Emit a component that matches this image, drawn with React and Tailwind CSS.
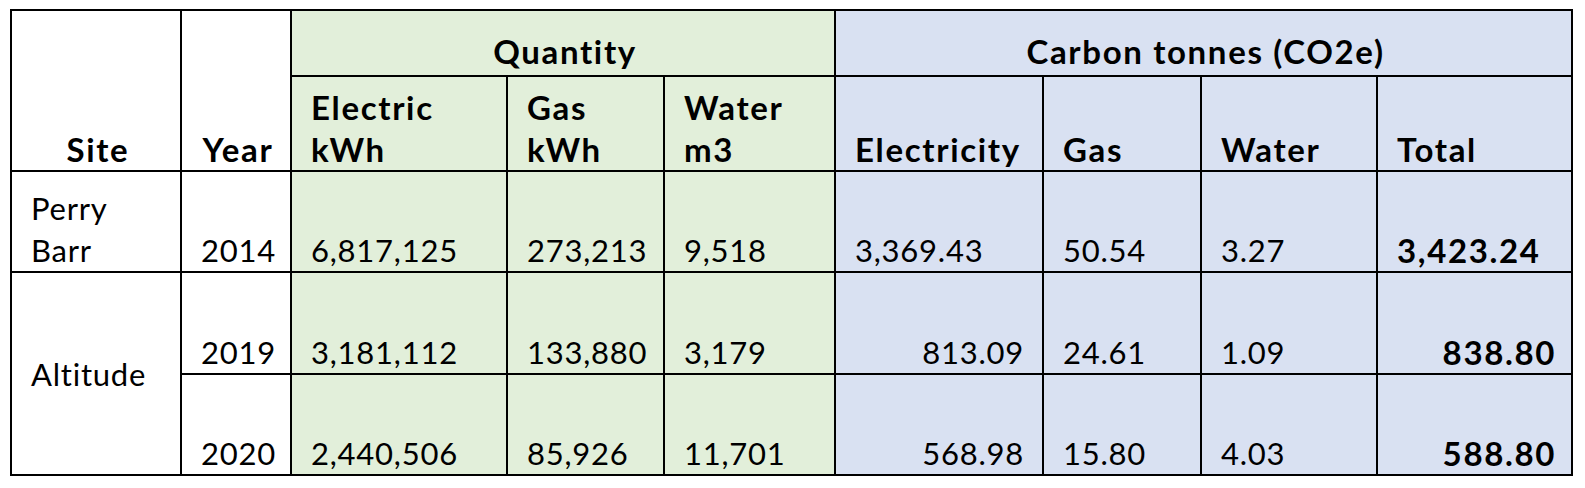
import React from 'react'

// Emissions summary table: quantities consumed and carbon tonnes per site/year.
const GREEN = 'bg-[#e2efda]'
const BLUE = 'bg-[#d9e1f2]'
// Bold text in the source is a wide face, so it gets a touch more size and tracking.
const BOLD = 'font-bold text-[33px] tracking-[0.05em]'

const rows = [
  { site: ['Perry', 'Barr'], year: '2014', elec: '6,817,125', gas: '273,213', water: '9,518', cElec: '3,369.43', cGas: '50.54', cWater: '3.27', total: '3,423.24', rightCarbon: false },
  { site: ['Altitude'], span: 2, year: '2019', elec: '3,181,112', gas: '133,880', water: '3,179', cElec: '813.09', cGas: '24.61', cWater: '1.09', total: '838.80', rightCarbon: true },
  { year: '2020', elec: '2,440,506', gas: '85,926', water: '11,701', cElec: '568.98', cGas: '15.80', cWater: '4.03', total: '588.80', rightCarbon: true },
]

const cell = 'border-2 border-black align-bottom pl-[19px] pr-[15px] pb-0'

export default function App() {
  return (
    <div className="bg-white w-[1585px] h-[488px] pt-[9px] pl-[10px] font-['Lato',sans-serif] text-[31px] leading-[42px] text-black tracking-[0.025em]">
      <table className="table-fixed border-collapse w-[1563px]">
        <colgroup>
          <col className="w-[170px]" />
          <col className="w-[110px]" />
          <col className="w-[216px]" />
          <col className="w-[157px]" />
          <col className="w-[171px]" />
          <col className="w-[208px]" />
          <col className="w-[158px]" />
          <col className="w-[176px]" />
          <col className="w-[195px]" />
        </colgroup>
        <thead className={BOLD}>
          <tr className="h-[66px]">
            <th rowSpan={2} className={`${cell} text-center pl-0 pr-0`}>Site</th>
            <th rowSpan={2} className={`${cell} text-center pl-0 pr-0`}>Year</th>
            <th colSpan={3} className={`${cell} ${GREEN} text-center pb-[3px]`}>Quantity</th>
            <th colSpan={4} className={`${cell} ${BLUE} text-center pb-[3px]`}>Carbon tonnes (CO2e)</th>
          </tr>
          <tr className="h-[95px]">
            <th className={`${cell} ${GREEN} text-left`}>Electric<br />kWh</th>
            <th className={`${cell} ${GREEN} text-left`}>Gas<br />kWh</th>
            <th className={`${cell} ${GREEN} text-left`}>Water<br />m3</th>
            <th className={`${cell} ${BLUE} text-left pl-[17px]`}>Electricity</th>
            <th className={`${cell} ${BLUE} text-left`}>Gas</th>
            <th className={`${cell} ${BLUE} text-left`}>Water</th>
            <th className={`${cell} ${BLUE} text-left`}>Total</th>
          </tr>
        </thead>
        <tbody>
          {rows.map((r, i) => (
            <tr key={r.year} className={i === 1 ? 'h-[102px]' : 'h-[101px]'}>
              {r.site && (
                <td rowSpan={r.span || 1} className={`${cell} text-left ${r.span ? 'align-middle' : ''}`}>
                  {r.site.map((s, k) => <div key={k}>{s}</div>)}
                </td>
              )}
              <td className={`${cell} text-right`}>{r.year}</td>
              <td className={`${cell} ${GREEN} text-left`}>{r.elec}</td>
              <td className={`${cell} ${GREEN} text-left`}>{r.gas}</td>
              <td className={`${cell} ${GREEN} text-left`}>{r.water}</td>
              <td className={`${cell} ${BLUE} ${r.rightCarbon ? 'text-right pr-[18px]' : 'text-left'}`}>{r.cElec}</td>
              <td className={`${cell} ${BLUE} text-left`}>{r.cGas}</td>
              <td className={`${cell} ${BLUE} text-left`}>{r.cWater}</td>
              <td className={`${cell} ${BLUE} ${BOLD} ${r.rightCarbon ? 'text-right pr-[11px]' : 'text-left'}`}>{r.total}</td>
            </tr>
          ))}
        </tbody>
      </table>
    </div>
  )
}
